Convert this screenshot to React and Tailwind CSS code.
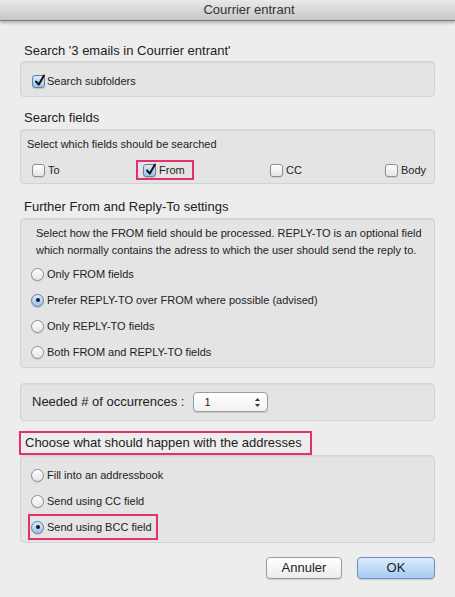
import React from 'react';

function Check({ on }) {
  return (
    <span
      className={
        on
          ? 'relative inline-block w-[13px] h-[13px] shrink-0 rounded-[3px] border border-[#5f7fa6] bg-gradient-to-b from-[#dcebfa] to-[#9cc2ea] shadow-[0_1px_1px_rgba(0,0,0,0.15)]'
          : 'relative inline-block w-[13px] h-[13px] shrink-0 rounded-[3px] border border-[#8d8d8d] bg-gradient-to-b from-white to-[#e6e6e6] shadow-[0_1px_1px_rgba(0,0,0,0.1)]'
      }
    >
      {on && (
        <svg className="absolute -top-[2px] left-[1px]" width="12" height="13" viewBox="0 0 12 13">
          <path d="M2 7.5 L4.8 10.5 L10 1.5" fill="none" stroke="#111" strokeWidth="2" strokeLinecap="round" strokeLinejoin="round" />
        </svg>
      )}
    </span>
  );
}

function Radio({ on }) {
  return (
    <span
      className={
        on
          ? 'inline-flex items-center justify-center w-[13px] h-[13px] shrink-0 rounded-full border border-[#5f7fa6] bg-gradient-to-b from-[#dcebfa] to-[#9cc2ea] shadow-[0_1px_1px_rgba(0,0,0,0.15)]'
          : 'inline-flex items-center justify-center w-[13px] h-[13px] shrink-0 rounded-full border border-[#8d8d8d] bg-gradient-to-b from-white to-[#e6e6e6] shadow-[0_1px_1px_rgba(0,0,0,0.1)]'
      }
    >
      {on && <span className="w-[4px] h-[4px] rounded-full bg-[#1a1a1a]" />}
    </span>
  );
}

function RadioRow({ on, children }) {
  return (
    <div className="flex items-center h-[26px] gap-[3px] pl-[10px] text-[11px]">
      <Radio on={on} />
      <span>{children}</span>
    </div>
  );
}

const box = 'mx-[20px] rounded-[4px] border border-[#d2d2d2] bg-[#e4e4e4] shadow-[inset_0_1px_1px_rgba(0,0,0,0.04)]';

export default function App() {
  return (
    <div className="w-[455px] h-[597px] overflow-hidden bg-[#ededed] text-[#222] font-['Liberation_Sans',Arial,sans-serif]">
      <div className="relative h-[21px] flex items-center justify-center pl-[43px] bg-gradient-to-b from-[#e9e9e9] to-[#c7c7c7] border-b border-[#7a7a7a] shadow-[0_2px_3px_rgba(0,0,0,0.25)] text-[13px] text-[#333]">
        Courrier entrant
      </div>

      <div className="mt-[22px] ml-[24px] h-[16px] leading-[16px] text-[13px]">Search '3 emails in Courrier entrant'</div>
      <div className={`${box} mt-[2px] h-[36px] flex items-center pt-[4px] pl-[11px] gap-[2px] text-[11px]`}>
        <Check on />
        <span>Search subfolders</span>
      </div>

      <div className="mt-[13px] ml-[24px] h-[16px] leading-[16px] text-[13px]">Search fields</div>
      <div className={`${box} mt-[3px] h-[55px] pt-[7px]`}>
        <div className="pl-[6px] h-[14px] leading-[14px] text-[11px]">Select which fields should be searched</div>
        <div className="mt-[9px] pl-[11px] grid grid-cols-[104px_134px_115px_auto] items-center h-[20px] text-[11px]">
          <div className="flex items-center gap-[3px]">
            <Check />
            <span>To</span>
          </div>
          <div className="flex items-center gap-[3px] w-[58px] h-[20px] border-2 border-[#e4306f] pl-[5px]">
            <Check on />
            <span>From</span>
          </div>
          <div className="flex items-center gap-[3px]">
            <Check />
            <span>CC</span>
          </div>
          <div className="flex items-center gap-[3px]">
            <Check />
            <span>Body</span>
          </div>
        </div>
      </div>

      <div className="mt-[15px] ml-[24px] h-[16px] leading-[16px] text-[13px]">Further From and Reply-To settings</div>
      <div className={`${box} mt-[3px] h-[150px] pt-[6px]`}>
        <div className="pl-[15px] pr-[8px] leading-[17px] text-[11px]">
          Select how the FROM field should be processed. REPLY-TO is an optional field
          <br />
          which normally contains the adress to which the user should send the reply to.
        </div>
        <div className="mt-[2px]">
          <RadioRow>Only FROM fields</RadioRow>
          <RadioRow on>Prefer REPLY-TO over FROM where possible (advised)</RadioRow>
          <RadioRow>Only REPLY-TO fields</RadioRow>
          <RadioRow>Both FROM and REPLY-TO fields</RadioRow>
        </div>
      </div>

      <div className={`${box} mt-[15px] h-[38px] flex items-center pl-[11px] text-[13px]`}>
        <span>Needed # of occurrences :</span>
        <div className="ml-[9px] w-[75px] h-[20px] flex items-center justify-between px-[10px] pr-[6px] rounded-[4px] border border-[#9b9b9b] bg-gradient-to-b from-white to-[#f1f1f1] shadow-[0_1px_1px_rgba(0,0,0,0.12)] text-[11px]">
          <span>1</span>
          <svg width="7" height="11" viewBox="0 0 7 11">
            <path d="M3.5 1 L6 4 L1 4 Z" fill="#333" />
            <path d="M3.5 10 L6 7 L1 7 Z" fill="#333" />
          </svg>
        </div>
      </div>

      <div className="mt-[10px] ml-[19px] w-[293px] h-[24px] flex items-center pl-[4px] border-2 border-[#e4306f] text-[13px]">
        Choose what should happen with the addresses
      </div>
      <div className={`${box} h-[88px] pt-[6px]`}>
        <RadioRow>Fill into an addressbook</RadioRow>
        <RadioRow>Send using CC field</RadioRow>
        <div className="ml-[7px] w-[130px] h-[26px] flex items-center gap-[3px] border-2 border-[#e4306f] pl-[1px] text-[11px]">
          <Radio on />
          <span>Send using BCC field</span>
        </div>
      </div>

      <div className="mt-[14px] pr-[20px] flex justify-end gap-[15px] text-[13px]">
        <button className="w-[76px] h-[22px] rounded-[4px] border border-[#9a9a9a] bg-gradient-to-b from-white to-[#ececec] shadow-[0_1px_1px_rgba(0,0,0,0.15)] text-[#222]">
          Annuler
        </button>
        <button className="w-[78px] h-[22px] rounded-[4px] border border-[#6b8fc2] bg-gradient-to-b from-[#dcebfb] to-[#a6cbf2] shadow-[0_1px_1px_rgba(0,0,0,0.15)] text-[#222]">
          OK
        </button>
      </div>
    </div>
  );
}
